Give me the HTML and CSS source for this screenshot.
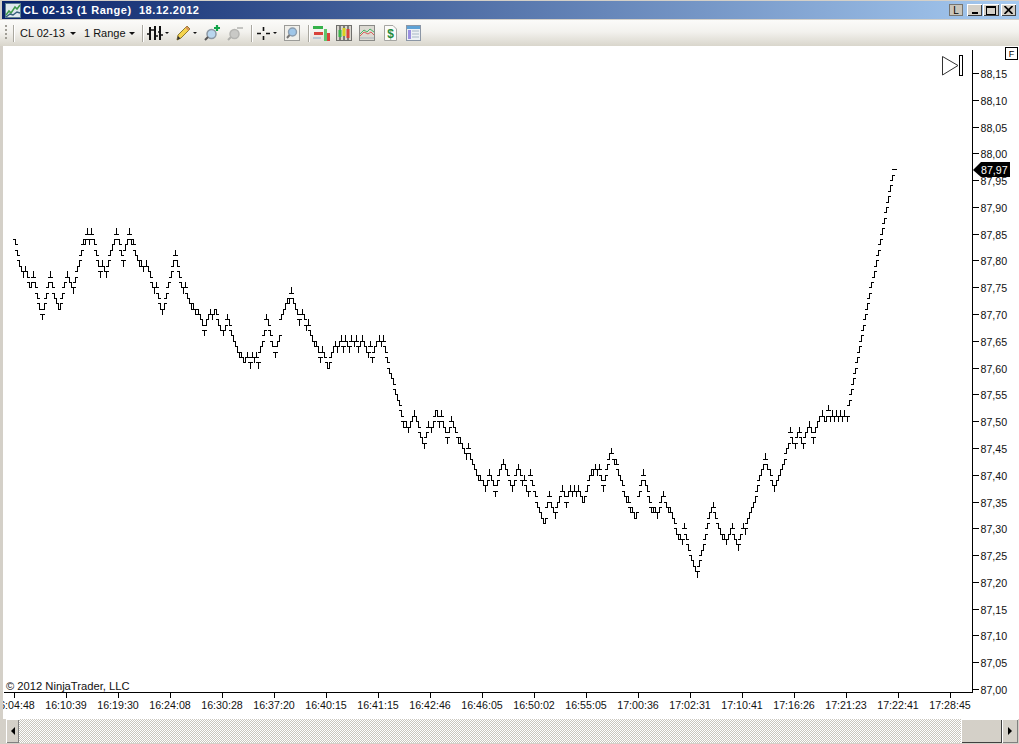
FILE: index.html
```html
<!DOCTYPE html>
<html lang="en">
<head>
<meta charset="utf-8">
<title>CL 02-13 (1 Range) 18.12.2012</title>
<link rel="stylesheet" href="styles.css">
</head>
<body>
<div class="window">
  <header class="titlebar">
    <svg class="app-icon" width="16" height="15" viewBox="0 0 16 15">
      <rect x="0.5" y="0.5" width="15" height="14" fill="#dfe8ee" stroke="#5d7f8f"/>
      <path d="M1 12 L4 8 L6 10 L10 4 L12 6 L15 2" fill="none" stroke="#3f9a4a" stroke-width="1.5"/>
      <path d="M1 14 L5 11 L8 12 L12 9 L15 10" fill="none" stroke="#36607c" stroke-width="1.5"/>
    </svg>
    <span class="title-text">CL 02-13 (1 Range)&nbsp;&nbsp;18.12.2012</span>
    <div class="win-buttons">
      <span class="win-btn lock">L</span>
      <span class="win-btn min"><i class="min-bar"></i></span>
      <span class="win-btn max"><i class="max-box"></i></span>
      <span class="win-btn close">
        <svg width="9" height="8" viewBox="0 0 9 8"><path d="M0.5 0 L8.5 8 M8.5 0 L0.5 8" stroke="#000" stroke-width="1.7"/></svg>
      </span>
    </div>
  </header>

  <nav class="toolbar">
    <span class="grip"></span>
    <span class="sep first"></span>
    <span class="tb-text inst">CL 02-13</span><span class="arrow a-inst"></span>
    <span class="tb-text range">1 Range</span><span class="arrow a-range"></span>
    <span class="sep s1"></span>

    <svg class="ico i-bars" width="16" height="16" viewBox="0 0 16 16">
      <path d="M3 2V15M8 1V15M13 1V15" stroke="#111" stroke-width="2" fill="none"/>
      <path d="M0 9H3M3 5H6M6 5H8M8 11H11M11 7H13M13 10H16" stroke="#111" stroke-width="1.4" fill="none"/>
    </svg>
    <span class="arrow small a-bars"></span>

    <svg class="ico i-pencil" width="15" height="16" viewBox="0 0 15 16">
      <path d="M1 15 L2 10 L11 1 L14 4 L5 13 Z" fill="#f5d44e" stroke="#8d7a32"/>
      <path d="M1 15 L2 11 L4.5 13.5 Z" fill="#333"/>
      <path d="M10 2 L13 5" stroke="#d98f5c" stroke-width="2"/>
    </svg>
    <span class="arrow small a-pencil"></span>

    <svg class="ico i-zoomin" width="17" height="16" viewBox="0 0 17 16">
      <circle cx="7.5" cy="9" r="4.5" fill="#b9d6ee" stroke="#8b97a3" stroke-width="1.5"/>
      <path d="M4 12 L1 15" stroke="#555" stroke-width="2"/>
      <path d="M13 0V6M10 3H16" stroke="#12a34a" stroke-width="2.2"/>
    </svg>
    <svg class="ico i-zoomout" width="17" height="16" viewBox="0 0 17 16">
      <circle cx="7.5" cy="9" r="4.5" fill="#c9c9c6" stroke="#b5b5b2" stroke-width="1.5"/>
      <path d="M4 12 L1 15" stroke="#b0b0ad" stroke-width="2"/>
      <path d="M10 3H16" stroke="#c4c4c1" stroke-width="2"/>
    </svg>
    <span class="sep s2"></span>

    <svg class="ico i-cross" width="15" height="15" viewBox="0 0 15 15">
      <path d="M7.5 1V5M7.5 10V14M1 7.5H5M10 7.5H14" stroke="#111" stroke-width="1.6"/>
    </svg>
    <span class="arrow small a-cross"></span>

    <svg class="ico i-find" width="16" height="16" viewBox="0 0 16 16">
      <rect x="0.5" y="0.5" width="15" height="15" fill="#f0efea" stroke="#9b9b98"/>
      <circle cx="8.5" cy="7" r="4" fill="#9fc6e8" stroke="#8a9cae" stroke-width="1.4"/>
      <path d="M5.5 10 L3 13" stroke="#777" stroke-width="2"/>
    </svg>
    <span class="sep s3"></span>

    <svg class="ico i-indic" width="17" height="16" viewBox="0 0 17 16">
      <rect x="0" y="1" width="10" height="3" fill="#35b24a"/>
      <rect x="1" y="7" width="9" height="3" fill="#d8433a"/>
      <rect x="0" y="12" width="8" height="2" fill="#b9c8d4"/>
      <rect x="11" y="4" width="3" height="12" fill="#5fc56c"/>
      <rect x="14" y="8" width="3" height="8" fill="#d8433a"/>
    </svg>
    <svg class="ico i-candle" width="16" height="16" viewBox="0 0 16 16">
      <rect x="0.5" y="0.5" width="15" height="15" fill="#d9d7cf" stroke="#6f6f6c"/>
      <path d="M4 1V15M8 1V15M12 1V15" stroke="#222"/>
      <rect x="2.5" y="5" width="3" height="7" fill="#39b54a"/>
      <rect x="6.5" y="3" width="3" height="8" fill="#d8d21f"/>
      <rect x="10.5" y="4" width="3" height="9" fill="#d8433a"/>
    </svg>
    <svg class="ico i-line" width="16" height="16" viewBox="0 0 16 16">
      <rect x="0.5" y="0.5" width="15" height="15" fill="#dcdad2" stroke="#8a8a87"/>
      <path d="M1 9 L5 5 L8 7 L11 4 L15 7" fill="none" stroke="#4bb266"/>
      <path d="M1 11 L5 7 L9 9 L12 7 L15 10" fill="none" stroke="#d9605a"/>
      <path d="M1 13 H15" stroke="#a9b4bd"/>
    </svg>
    <svg class="ico i-dollar" width="13" height="16" viewBox="0 0 13 16">
      <path d="M0.5 0.5H9L12.5 4V15.5H0.5Z" fill="#fbfbf8" stroke="#a5a5a2"/>
      <text x="6.5" y="13" class="dollar-text">$</text>
    </svg>
    <svg class="ico i-table" width="15" height="16" viewBox="0 0 15 16">
      <rect x="0.5" y="0.5" width="14" height="15" fill="#eef1f5" stroke="#8b96a5"/>
      <rect x="1" y="1" width="13" height="3" fill="#5ea2d6"/>
      <rect x="2" y="5" width="3" height="9" fill="#9a8fe0"/>
      <path d="M6 6H13M6 9H13M6 12H13" stroke="#a8b7c6"/>
    </svg>
  </nav>

  <main class="chart">
    <svg id="chart-svg" class="chart-svg" width="1016" height="673" viewBox="3 46 1016 673">
      <path id="bars" class="bars" d=""/>
      <path class="axis" d="M972.5 50V692.5M4 692.5H973"/>
      <g id="y-axis"></g>
      <g id="x-axis"></g>
      <text class="copy" x="6" y="690">© 2012 NinjaTrader, LLC</text>
      <polygon class="flag" points="973,170 981,162 1010,162 1010,177 981,177"/>
      <text class="flag-text" x="981" y="174">87,97</text>
      <rect class="fbox" x="1005.5" y="47.5" width="12" height="12"/>
      <text class="ftext" x="1011.5" y="57">F</text>
      <path class="replay" d="M942.5 56.5L958 65.5L942.5 75Z"/>
      <rect class="replay-bar" x="959.5" y="55.5" width="3" height="20"/>
    </svg>
  </main>

  <footer class="scrollbar">
    <span class="sb-btn sb-left"><i class="tri-left"></i></span>
    <span class="sb-track"></span>
    <span class="sb-thumb"></span>
    <span class="sb-btn sb-right"><i class="tri-right"></i></span>
  </footer>
</div>
<script src="chart.js"></script>
</body>
</html>
```
FILE: styles.css
```css
* { box-sizing: border-box; }
html, body { margin: 0; padding: 0; height: 100%; overflow: hidden; }
body { background: #d4d0c8; font-family: "Liberation Sans", Arial, sans-serif; }

.window { width: 1019px; height: 744px; display: flex; flex-direction: column; padding-top: 1px; }

/* title bar */
.titlebar {
  height: 18px; margin: 0 0 1px 2px; padding-left: 3px;
  display: flex; align-items: center;
  background: linear-gradient(90deg, #0a246a 0%, #a6caf0 100%);
  color: #fff;
}
.app-icon { flex: none; margin-right: 2px; }
.title-text { font: bold 11px "Liberation Sans", Arial, sans-serif; letter-spacing: 0.55px; white-space: pre; }
.win-buttons { margin-left: auto; display: flex; padding-right: 3px; }
.win-btn {
  height: 12px; width: 15px;
  display: flex; align-items: center; justify-content: center;
  background: #d4d0c8; font: 10px "Liberation Sans", sans-serif; color: #000;
  box-shadow: inset 1px 1px 0 #fff, inset -1px -1px 0 #404040;
}
.win-btn.lock { width: 14px; margin-right: 4px; background: #c9c5bb; box-shadow: inset 0 0 0 1px #77756f; }
.win-btn.max { width: 16px; margin-left: 1px; }
.win-btn.close { margin-left: 2px; }
.min-bar { width: 6px; height: 2px; background: #000; margin-top: 6px; }
.max-box { width: 10px; height: 9px; border: 1px solid #000; border-top-width: 2px; }

/* tool bar */
.toolbar {
  height: 26px; flex: none; padding-left: 5px;
  display: flex; align-items: center;
  background: linear-gradient(180deg, #fbfbf9 0%, #f3f2ee 45%, #d9d6cc 100%);
}
.grip { width: 2px; height: 16px; background: repeating-linear-gradient(180deg, #a09e96 0 2px, transparent 2px 4px); }
.sep { width: 1px; height: 17px; background: #a9a79f; box-shadow: 1px 0 0 #fff; flex: none; }
.sep.first { margin-left: 6px; }
.sep.s1 { margin-left: 7px; }
.sep.s2 { margin-left: 7px; }
.sep.s3 { margin-left: 8px; }
.tb-text { font: 11px "Liberation Sans", Arial, sans-serif; color: #111; white-space: nowrap; }
.inst { margin-left: 6px; width: 47px; }
.range { margin-left: 8px; width: 42px; }
.arrow { width: 0; height: 0; flex: none; border: 3px solid transparent; border-top: 3px solid #111; border-bottom: 0; margin-left: 3px; }
.arrow.small { border-width: 2.5px; border-bottom: 0; margin-left: 2px; }
.ico { flex: none; display: block; }
.i-bars { margin-left: 4px; }
.i-pencil { margin-left: 7px; }
.i-zoomin { margin-left: 7px; }
.i-zoomout { margin-left: 6px; }
.i-cross { margin-left: 4px; }
.i-find { margin-left: 7px; }
.i-indic { margin-left: 4px; }
.i-candle { margin-left: 6px; }
.i-line { margin-left: 7px; }
.i-dollar { margin-left: 9px; }
.i-table { margin-left: 9px; }
.dollar-text { font: bold 12px "Liberation Sans", sans-serif; fill: #1e8a3c; text-anchor: middle; }

/* chart */
.chart { height: 673px; flex: none; margin-left: 3px; background: #fff; }
.chart-svg { display: block; }
.bars { fill: none; stroke: #000; stroke-width: 1; shape-rendering: crispEdges; }
.axis { fill: none; stroke: #000; stroke-width: 1; shape-rendering: crispEdges; }
.y-label, .x-label { font: 10.67px "Liberation Sans", Arial, sans-serif; fill: #111; }
.copy { font: 11.2px "Liberation Sans", Arial, sans-serif; fill: #111; }
.x-label { text-anchor: middle; }
.flag { fill: #000; }
.flag-text { font: 10.67px "Liberation Sans", Arial, sans-serif; fill: #fff; }
.fbox { fill: #fff; stroke: #000; shape-rendering: crispEdges; }
.ftext { font: 9px "Liberation Sans", sans-serif; fill: #000; text-anchor: middle; }
.replay { fill: #fff; stroke: #333; }
.replay-bar { fill: #fff; stroke: #000; shape-rendering: crispEdges; }

/* scroll bar */
.scrollbar { height: 24px; flex: none; margin: 0 1px 1px 6px; display: flex; background: #d4d0c8; }
.sb-btn {
  flex: none; display: flex; align-items: center; justify-content: center;
  background: #d4d0c8;
  box-shadow: inset 1px 1px 0 #fff, inset -1px -1px 0 #808080;
}
.sb-left { width: 13px; }
.sb-right { width: 16px; }
.sb-track { flex: 1; background: repeating-conic-gradient(#c9c6bd 0 25%, #fff 0 50%) 0 0 / 2px 2px; }
.sb-thumb {
  width: 41px; flex: none; background: #d4d0c8;
  box-shadow: inset 1px 1px 0 #fff, inset -1px -1px 0 #404040;
}
.tri-left { border: 4px solid transparent; border-left: 0; border-right: 4px solid #000; }
.tri-right { border: 4px solid transparent; border-right: 0; border-left: 4px solid #000; }
```
FILE: chart.js
```javascript
// Range-bar series: top price of each bar in ticks above 87.00
var SERIES = [
  84,82,80,79,78,79,78,76,76,78,76,74,72,70,72,74,76,78,76,74,73,72,72,74,76,
  78,77,76,75,77,79,80,82,84,84,86,84,86,84,82,80,78,80,79,78,80,82,83,84,86,
  84,82,80,83,84,86,84,84,82,81,80,80,79,80,79,78,76,75,76,74,72,71,72,74,76,
  78,80,82,80,78,76,75,76,74,73,72,72,71,71,70,69,67,69,70,71,70,71,71,69,68,
  67,68,70,69,67,66,65,64,63,63,62,62,63,61,63,62,63,61,64,65,67,70,69,67,65,
  63,65,66,70,71,72,73,73,75,73,72,71,69,71,70,68,69,67,66,65,65,64,62,64,63,
  61,61,63,64,65,64,65,66,64,66,65,64,66,65,66,64,65,66,65,64,63,65,62,64,65,
  66,65,66,64,62,60,59,58,56,55,54,52,50,50,49,50,51,52,51,50,48,47,46,48,50,
  49,50,52,52,50,52,50,49,47,49,51,50,49,47,47,46,45,44,46,44,43,42,41,40,40,
  39,38,39,41,40,39,37,39,41,42,43,42,41,39,38,39,41,42,41,39,40,38,37,41,39,
  37,35,34,33,32,32,35,37,35,34,33,35,36,38,37,35,37,38,37,38,37,38,37,36,36,
  38,40,41,41,42,41,42,40,38,40,42,44,45,43,43,41,40,39,37,36,36,34,34,33,33,
  37,39,41,39,38,36,34,34,34,33,34,36,37,35,34,34,33,32,30,29,29,28,31,29,27,
  25,24,23,22,24,26,27,29,31,33,34,35,33,31,30,29,29,28,29,30,31,29,28,27,29,
  31,30,32,33,34,35,36,38,40,41,42,44,42,41,39,38,39,40,41,42,43,45,46,49,47,
  46,48,49,47,46,48,49,50,49,47,49,50,51,52,51,51,53,51,52,51,52,51,52,51,52,
  51,54,56,58,60,62,64,66,68,70,72,74,76,78,80,82,84,86,88,90,92,94,96,97
];

var SVG_NS = "http://www.w3.org/2000/svg";
var X0 = 14.5, STEP = 2.08, TICK = 5.357, ZERO_Y = 689;

function priceY(t) { return Math.round(ZERO_Y - t * TICK) + 0.5; }

function buildBars() {
  var d = "";
  SERIES.forEach(function (t, i) {
    var x = Math.round(X0 + i * STEP) + 0.5;
    var top = priceY(t), bot = priceY(t - 1);
    if (i === SERIES.length - 1) { d += "M" + (x - 3) + " " + top + "H" + (x + 2); return; }
    var prev = i ? SERIES[i - 1] : t + 1;
    var next = SERIES[i + 1];
    var left = bot, right = top;              // rising bar
    if (prev > t && next > t) { left = top; right = top; }        // trough
    else if (prev < t && next < t) { left = bot; right = bot; }   // peak
    else if (prev > t || next < t) { left = top; right = bot; }   // falling bar
    else if (prev === t && next === t) { if (i % 2) { left = top; right = bot; } }
    d += "M" + x + " " + (top - 0.5) + "V" + (bot + 0.5);
    d += "M" + (x - 2.5) + " " + left + "H" + (x + 0.5);
    d += "M" + (x - 0.5) + " " + right + "H" + (x + 2.5);
  });
  document.getElementById("bars").setAttribute("d", d);
}

function addText(parent, cls, x, y, str) {
  var el = document.createElementNS(SVG_NS, "text");
  el.setAttribute("class", cls);
  el.setAttribute("x", x);
  el.setAttribute("y", y);
  el.textContent = str;
  parent.appendChild(el);
}

function buildAxes() {
  var yAxis = document.getElementById("y-axis");
  var xAxis = document.getElementById("x-axis");
  var axisPath = document.querySelector(".axis");
  var d = axisPath.getAttribute("d");
  for (var t = 0; t <= 115; t += 5) {
    var y = Math.round(ZERO_Y - t * TICK);
    var price = 8700 + t;
    var label = Math.floor(price / 100) + "," + ("0" + (price % 100)).slice(-2);
    d += "M973 " + (y + 0.5) + "H979";
    addText(yAxis, "y-label", 980.5, y + 5, label);
  }
  var times = ["16:04:48","16:10:39","16:19:30","16:24:08","16:30:28","16:37:20","16:40:15","16:41:15",
               "16:42:46","16:46:05","16:50:02","16:55:05","17:00:36","17:02:31","17:10:41","17:16:26",
               "17:21:23","17:22:41","17:28:45"];
  times.forEach(function (s, i) {
    var x = 14 + i * 52;
    d += "M" + (x + 0.5) + " 692V698";
    addText(xAxis, "x-label", x, 709, s);
  });
  axisPath.setAttribute("d", d);
}

buildBars();
buildAxes();
```
